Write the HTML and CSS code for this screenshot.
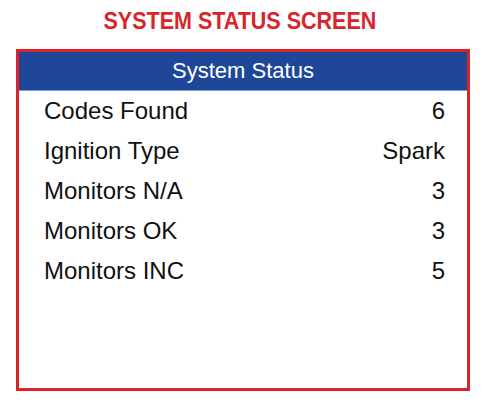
FILE: index.html
```html
<!DOCTYPE html>
<html>
<head>
<meta charset="utf-8">
<link rel="stylesheet" href="styles.css">
</head>
<body>
<h1 class="title"><span class="title-text">SYSTEM STATUS SCREEN</span></h1>
<div class="screen">
  <div class="header">System Status</div>
  <div class="rows">
    <div class="row"><span>Codes Found</span><span>6</span></div>
    <div class="row"><span>Ignition Type</span><span>Spark</span></div>
    <div class="row"><span>Monitors N/A</span><span>3</span></div>
    <div class="row"><span>Monitors OK</span><span>3</span></div>
    <div class="row"><span>Monitors INC</span><span>5</span></div>
  </div>
</div>
</body>
</html>
```
FILE: styles.css
```css
html, body {
  margin: 0;
  padding: 0;
  background: #ffffff;
}
body {
  width: 485px;
  height: 403px;
  font-family: "Liberation Sans", Arial, sans-serif;
}
.title {
  margin: 0;
  padding-top: 8px;
  height: 49px;
  box-sizing: border-box;
  text-align: center;
  color: #d8242c;
  font-size: 23px;
  line-height: 26px;
  font-weight: bold;
}
.title-text {
  display: inline-block;
  transform: scaleX(0.935);
  transform-origin: 50% 50%;
  margin-left: -6px;
}
.screen {
  margin-left: 16px;
  width: 454px;
  height: 342px;
  box-sizing: border-box;
  border: 3px solid #d9232b;
  display: flex;
  flex-direction: column;
}
.header {
  background: #1e4799;
  color: #ffffff;
  height: 39px;
  box-sizing: border-box;
  border-bottom: 1px solid #7f9ed6;
  text-align: center;
  font-size: 22px;
  line-height: 38px;
}
.rows {
  display: flex;
  flex-direction: column;
  padding: 0 22px 0 25px;
}
.row {
  display: flex;
  justify-content: space-between;
  height: 40px;
  line-height: 40px;
  font-size: 24px;
  color: #111111;
}
```
